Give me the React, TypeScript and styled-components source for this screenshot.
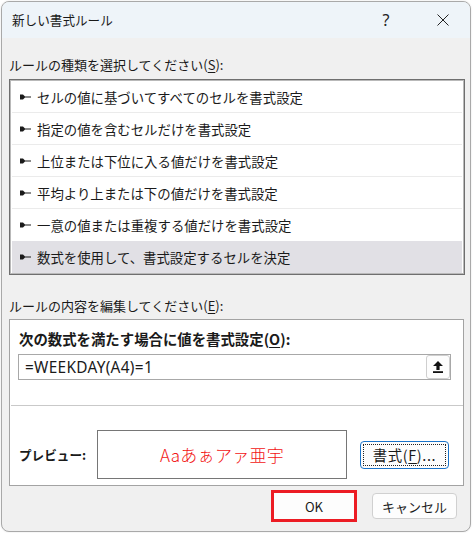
import React from 'react';
import styled, { createGlobalStyle } from 'styled-components';

const GlobalStyle = createGlobalStyle`
    html, body {
        margin: 0;
        padding: 0;
        background: #ffffff;
    }
    body {
        font-family: 'Noto Sans CJK JP', 'Noto Sans', sans-serif;
        color: #1a1a1a;
    }
`;

const Backdrop = styled.div`
    width: 474px;
    height: 533px;
    padding: 1px 0 0 1px;
    box-sizing: border-box;
    background: #ffffff;
`;

const Window = styled.div`
    width: 470px;
    border: 1px solid #a9a9a9;
    border-radius: 8px;
    overflow: hidden;
    background: #f0f0f0;
    box-sizing: border-box;
    display: flex;
    flex-direction: column;
    box-shadow: 0 0 2px rgba(0, 0, 0, 0.12);
`;

const TitleBar = styled.div`
    height: 36px;
    background: #eef4f9;
    display: flex;
    align-items: center;
    padding-left: 10px;
`;

const Title = styled.div`
    flex: 1;
    font-size: 12.6px;
    line-height: 18px;
    color: #1a1a1a;
`;

const TitleButton = styled.div<{ $gap?: number }>`
    width: 46px;
    height: 36px;
    margin-right: ${(p) => p.$gap ?? 0}px;
    display: flex;
    align-items: center;
    justify-content: center;
    font-family: 'Noto Sans', sans-serif;
    font-size: 16px;
    color: #222;
`;

const Body = styled.div`
    display: flex;
    flex-direction: column;
    padding: 0 5px 9px 7px;
`;

const SectionLabel = styled.div<{ $top: number }>`
    margin-top: ${(p) => p.$top}px;
    font-size: 13px;
    line-height: 18px;
    white-space: nowrap;
    color: #1a1a1a;
`;

const Key = styled.span`
    text-decoration: underline;
    text-underline-offset: 2px;
`;

const ListBox = styled.div`
    margin-top: 5px;
    border: 1px solid #6f6f6f;
    box-shadow: inset 0 0 0 1px #b9b9b9;
    background: #ffffff;
    padding: 1px 2px;
    display: flex;
    flex-direction: column;
`;

const RuleRow = styled.div<{ $selected?: boolean; $last?: boolean }>`
    height: 32px;
    box-sizing: border-box;
    display: flex;
    align-items: center;
    gap: 6px;
    padding-left: 8px;
    background: ${(p) => (p.$selected ? '#e1e0e5' : 'transparent')};
    border-bottom: ${(p) => (p.$last ? 'none' : '1px solid #ebebeb')};
    font-size: 13.4px;
    white-space: nowrap;
    color: #1a1a1a;
`;

const GroupBox = styled.div`
    margin-top: 4px;
    margin-right: 1px;
    border: 1px solid #a3a3a3;
    background: #ffffff;
    display: flex;
    flex-direction: column;
    padding: 10px 0 6px 0;
`;

const GroupLabel = styled.div`
    padding-left: 9px;
    font-size: 14.4px;
    font-weight: 700;
    line-height: 18px;
    white-space: nowrap;
    color: #1a1a1a;
`;

const FormulaField = styled.div`
    margin: 6px 12px 0 8px;
    height: 26px;
    box-sizing: border-box;
    border: 1px solid #a8a8a8;
    display: flex;
    align-items: center;
    padding-left: 6px;
`;

const FormulaText = styled.div`
    flex: 1;
    font-family: 'Noto Sans', sans-serif;
    font-size: 15.4px;
    color: #1a1a1a;
    letter-spacing: 0.3px;
`;

const CollapseButton = styled.div`
    width: 24px;
    height: 24px;
    box-sizing: border-box;
    border: 1px solid #cfcfcf;
    border-radius: 3px;
    background: #fdfdfd;
    display: flex;
    align-items: center;
    justify-content: center;
`;

const Divider = styled.div`
    margin: 25px 0 0 1px;
    height: 1px;
    background: #c9c9c9;
`;

const PreviewRow = styled.div`
    margin-top: 24px;
    display: flex;
    align-items: center;
    padding: 0 14px 0 9px;
`;

const PreviewLabel = styled.div`
    width: 78px;
    font-size: 12.6px;
    font-weight: 700;
    white-space: nowrap;
    color: #1a1a1a;
`;

const PreviewBox = styled.div`
    width: 250px;
    height: 49px;
    box-sizing: border-box;
    border: 1px solid #767676;
    display: flex;
    align-items: center;
    justify-content: center;
    font-size: 17px;
    font-weight: 300;
    color: #f21414;
    letter-spacing: 0.3px;
    white-space: nowrap;
`;

const FormatButton = styled.div`
    margin-left: auto;
    width: 89px;
    height: 28px;
    box-sizing: border-box;
    border: 1px solid #1a73c9;
    border-radius: 4px;
    background: #fdfdfd;
    padding: 2px;
    display: flex;
`;

const FocusRing = styled.div`
    flex: 1;
    border: 1px dotted #222;
    display: flex;
    align-items: center;
    justify-content: center;
    font-size: 14.4px;
    letter-spacing: 0.6px;
    white-space: nowrap;
    color: #1a1a1a;
`;

const ButtonRow = styled.div`
    margin-top: 4px;
    padding-right: 8px;
    display: flex;
    justify-content: flex-end;
    align-items: center;
    gap: 15px;
`;

const DialogButton = styled.div<{ $marked?: boolean }>`
    width: ${(p) => (p.$marked ? 86 : 85)}px;
    height: ${(p) => (p.$marked ? 32 : 26)}px;
    box-sizing: border-box;
    border: ${(p) => (p.$marked ? '3px solid #ec1c24' : '1px solid #d0d0d0')};
    border-radius: ${(p) => (p.$marked ? 0 : 4)}px;
    background: #fdfdfd;
    display: flex;
    align-items: center;
    justify-content: center;
    font-size: 13px;
    color: #1a1a1a;
    white-space: nowrap;
`;

const RuleMarker = () => (
    <svg width="11" height="6" viewBox="0 0 11 6">
        <path d="M0 0.5 H3 L5 2.4 H11 V3.4 H5 L3 5.5 H0 Z" fill="#1a1a1a" />
    </svg>
);

const CloseIcon = () => (
    <svg width="12" height="12" viewBox="0 0 12 12">
        <path d="M0.5 0.5 L11.5 11.5 M11.5 0.5 L0.5 11.5" stroke="#222" strokeWidth="1" fill="none" />
    </svg>
);

const UploadIcon = () => (
    <svg width="10" height="12" viewBox="0 0 10 12">
        <path d="M5 0 L10 5 H6.6 V9 H3.4 V5 H0 Z" fill="#111" />
        <rect x="0" y="10.2" width="10" height="1.8" fill="#111" />
    </svg>
);

const rules = [
    'セルの値に基づいてすべてのセルを書式設定',
    '指定の値を含むセルだけを書式設定',
    '上位または下位に入る値だけを書式設定',
    '平均より上または下の値だけを書式設定',
    '一意の値または重複する値だけを書式設定',
    '数式を使用して、書式設定するセルを決定',
];

const App = () => {
    return (
        <>
            <GlobalStyle />
            <Backdrop>
                <Window>
                    <TitleBar>
                        <Title>新しい書式ルール</Title>
                        <TitleButton $gap={11}>?</TitleButton>
                        <TitleButton $gap={4}>
                            <CloseIcon />
                        </TitleButton>
                    </TitleBar>
                    <Body>
                        <SectionLabel $top={18}>
                            ルールの種類を選択してください(<Key>S</Key>):
                        </SectionLabel>
                        <ListBox>
                            {rules.map((rule, i) => (
                                <RuleRow
                                    key={rule}
                                    $selected={i === rules.length - 1}
                                    $last={i >= rules.length - 2}
                                >
                                    <RuleMarker />
                                    {rule}
                                </RuleRow>
                            ))}
                        </ListBox>
                        <SectionLabel $top={22}>
                            ルールの内容を編集してください(<Key>E</Key>):
                        </SectionLabel>
                        <GroupBox>
                            <GroupLabel>
                                次の数式を満たす場合に値を書式設定(<Key>O</Key>):
                            </GroupLabel>
                            <FormulaField>
                                <FormulaText>=WEEKDAY(A4)=1</FormulaText>
                                <CollapseButton>
                                    <UploadIcon />
                                </CollapseButton>
                            </FormulaField>
                            <Divider />
                            <PreviewRow>
                                <PreviewLabel>プレビュー:</PreviewLabel>
                                <PreviewBox>Aaあぁアァ亜宇</PreviewBox>
                                <FormatButton>
                                    <FocusRing>
                                        書式(<Key>F</Key>)...
                                    </FocusRing>
                                </FormatButton>
                            </PreviewRow>
                        </GroupBox>
                        <ButtonRow>
                            <DialogButton $marked>OK</DialogButton>
                            <DialogButton>キャンセル</DialogButton>
                        </ButtonRow>
                    </Body>
                </Window>
            </Backdrop>
        </>
    );
};

export default App;
